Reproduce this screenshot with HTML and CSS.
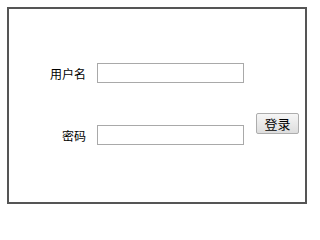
FILE: index.html
```html
<!DOCTYPE html>
<html lang="zh">
<head>
<meta charset="utf-8">
<title>登录</title>
<link rel="stylesheet" href="styles.css">
</head>
<body>
<div class="box">
  <form class="login">
    <label class="label" for="user">用户名</label>
    <input class="field" id="user" type="text">
    <label class="label row2" for="pass">密码</label>
    <input class="field row2" id="pass" type="password">
    <button class="btn" type="button">登录</button>
  </form>
</div>
</body>
</html>
```
FILE: styles.css
```css
body {
  margin: 7px;
  font-family: "Noto Sans CJK SC", "Noto Sans", sans-serif;
  color: #000;
  background: #fff;
}
.box {
  width: 296px;
  height: 193px;
  border: 2px solid #555;
}
.login {
  display: grid;
  grid-template-columns: 77px 147px 43px;
  grid-template-rows: 20px 20px;
  column-gap: 11px;
  row-gap: 42px;
  padding-top: 54px;
  margin: 0;
}
.label {
  grid-column: 1;
  text-align: right;
  font-size: 12px;
  line-height: 20px;
  padding-top: 1px;
  white-space: nowrap;
}
.field {
  grid-column: 2;
  box-sizing: border-box;
  width: 147px;
  height: 20px;
  margin: 0;
  padding: 0 2px;
  border: 1px solid #a9a9a9;
  background: #fff;
  font-size: 12px;
}
.row2 {
  grid-row: 2;
}
.btn {
  grid-column: 3;
  grid-row: 1 / span 2;
  align-self: end;
  margin: 0 0 11px 1px;
  box-sizing: border-box;
  width: 43px;
  height: 21px;
  padding: 0;
  border: 1px solid #adadad;
  border-radius: 2px;
  background: linear-gradient(#f6f6f6, #dddddd);
  font-family: "Noto Sans CJK SC", sans-serif;
  font-size: 13px;
  line-height: 19px;
  color: #000;
}
```
